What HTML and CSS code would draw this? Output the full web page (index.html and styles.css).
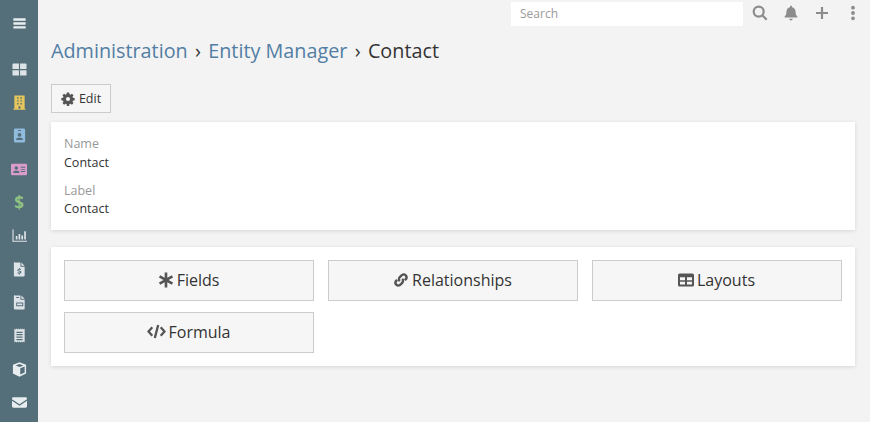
FILE: index.html
```html
<!DOCTYPE html>
<html lang="en">
<head>
<meta charset="utf-8">
<title>Contact - Entity Manager</title>
<link rel="stylesheet" href="styles.css">
</head>
<body>
<aside class="sidebar">
  <a class="toggle"><svg class="ico" viewBox="0 0 16 16"><path fill="#e8edef" d="M2 2.500h12a.6.6 0 0 1 .6.6v1.300a.6.6 0 0 1-.6.6H2a.6.6 0 0 1-.6-.6V3.100a.6.6 0 0 1 .6-.6zM2 6.700h12a.6.6 0 0 1 .6.6v1.300a.6.6 0 0 1-.6.6H2a.6.6 0 0 1-.6-.6V7.300a.6.6 0 0 1 .6-.6zM2 10.900h12a.6.6 0 0 1 .6.6v1.300a.6.6 0 0 1-.6.6H2a.6.6 0 0 1-.6-.6v-1.300a.6.6 0 0 1 .6-.6z"/></svg></a>
  <nav class="nav">
    <a><svg class="ico" viewBox="0 0 16 16"><path fill="#dde3e6" d="M.5 2.500a1 1 0 0 1 1-1h5.900v6H.5zM8.600 1.500h5.900a1 1 0 0 1 1 1v5H8.600zM.5 8.700h6.900v5.800H1.500a1 1 0 0 1-1-1zM8.600 8.700h6.900v4.800a1 1 0 0 1-1 1H8.600z"/></svg></a>
    <a><svg class="ico" viewBox="0 0 16 16"><path fill="#e6c65c" fill-rule="evenodd" d="M2.500.5h11v14.200h1v1h-13v-1h1zM5.500 2.500v1.500h1.500V2.500zM9 2.500v1.500h1.500V2.500zM5.500 5.500V7h1.500V5.500zM9 5.500V7h1.500V5.500zM5.500 8.500V10h1.500V8.500zM9 8.500V10h1.500V8.500zM7 12v2.700h2V12z"/></svg></a>
    <a><svg class="ico" viewBox="0 0 16 16"><path fill="#8fbbdc" fill-rule="evenodd" d="M3.500.5h9A1.500 1.500 0 0 1 14 2v12a1.500 1.500 0 0 1-1.500 1.500h-9A1.500 1.500 0 0 1 2 14V2A1.500 1.500 0 0 1 3.500.5zM6.500 2.200v1h3v-1zM8 5.200a2 2 0 1 0 0 4 2 2 0 0 0 0-4zM5 12.800h6c.4 0 .5-.3.5-.6 0-1-.9-1.800-1.900-1.800H6.400c-1 0-1.900.8-1.900 1.800 0 .3.1.6.5.6z"/></svg></a>
    <a><svg class="ico wide" viewBox="0 0 18 16"><path fill="#d99ccb" fill-rule="evenodd" d="M1.500 1.500h15A1.500 1.500 0 0 1 18 3v10a1.500 1.500 0 0 1-1.500 1.500h-15A1.500 1.500 0 0 1 0 13V3a1.500 1.500 0 0 1 1.500-1.500zM6 4.300a2 2 0 1 0 0 4 2 2 0 0 0 0-4zM3 12h6c.4 0 .5-.3.5-.6 0-1-.9-1.900-1.900-1.900H4.400c-1 0-1.900.9-1.900 1.900 0 .3.1.6.5.6zM11 5v1h5V5zM11 7.400v1h5v-1zM11 9.800v1h5v-1z"/></svg></a>
    <a class="dollar">$</a>
    <a><svg class="ico" viewBox="0 0 16 16"><path fill="#dde3e6" d="M.5 1.500h1.200v12h14.300v1.200H.5zM4 8.500h1.800v3.800H4zM7 6.500h1.800v5.800H7zM10 8h1.800v4.300H10zM13 3.500h1.800v8.800H13z"/></svg></a>
    <a><svg class="ico" viewBox="0 0 16 16"><path fill="#dde3e6" fill-rule="evenodd" d="M3 .5h6v4.500h4.500v9.500a1 1 0 0 1-1 1H3a1 1 0 0 1-1-1v-13.500a1 1 0 0 1 1-1zM10 .5l3.500 3.500H10zM7.300 6.500v.9c-1 .1-1.600.8-1.600 1.500 0 1.800 3.100 1 3.100 2 0 .6-1.800.5-2.700 0l-.4 1c.4.2 1 .4 1.600.4v1h1.200v-1c1-.2 1.600-.8 1.600-1.600 0-1.800-3.100-1.200-3.100-2 0-.6 1.400-.5 2.300-.1l.4-1c-.4-.2-.9-.3-1.300-.4v-.7z"/></svg></a>
    <a><svg class="ico" viewBox="0 0 16 16"><path fill="#dde3e6" fill-rule="evenodd" d="M3 .5h6v4.500h4.500v9.500a1 1 0 0 1-1 1H3a1 1 0 0 1-1-1v-13.500a1 1 0 0 1 1-1zM10 .5l3.500 3.500H10zM4.500 2.200v1h3v-1zM4.500 8v4h7.500V8zM5.500 9h5.500v1.800H5.500z"/></svg></a>
    <a><svg class="ico" viewBox="0 0 16 16"><path fill="#dde3e6" fill-rule="evenodd" d="M2.500.5l1.200 1 1.100-1 1.100 1 1.100-1 1.100 1 1.100-1 1.100 1 1.100-1 1.200 1 .9-1v15l-.9-1-1.200 1-1.100-1-1.100 1-1.100-1-1.100 1-1.100-1-1.100 1-1.100-1-1.200 1zM4.700 3.900v1.300h6.600V3.900zM4.700 6.500v1.300h6.600V6.500zM4.700 9.100v1.300h6.600V9.100zM4.700 11.700V13h6.600v-1.300z"/></svg></a>
    <a><svg class="ico" viewBox="0 0 16 16"><path fill="#e8edef" fill-rule="evenodd" d="M8 .3l7 2.600v9.400l-7 3.400-7-3.400V2.900zM8 2.100L3.900 3.600 8 5.300l4.100-1.700zM8.800 6.700v6.600l4.700-2.200V4.800z"/></svg></a>
    <a><svg class="ico" viewBox="0 0 16 16"><path fill="#e8edef" d="M1.500 2.500h13A1.500 1.500 0 0 1 16 4v.4L8 9.800 0 4.400V4a1.500 1.500 0 0 1 1.500-1.500zM0 6.200l8 5.300 8-5.300V12a1.500 1.500 0 0 1-1.500 1.500h-13A1.500 1.500 0 0 1 0 12z"/></svg></a>
  </nav>
</aside>
<div class="page">
  <header class="topbar">
    <input class="search" type="text" placeholder="Search">
    <svg class="tool" viewBox="0 0 16 16"><path fill="none" stroke="#8c8c8c" stroke-width="2.200" d="M6.700 1.600a5 5 0 1 1 0 10 5 5 0 0 1 0-10zM10.400 10.400l4.300 4.300"/></svg>
    <svg class="tool" viewBox="0 0 16 16"><path fill="#8c8c8c" d="M8 .7c.6 0 1 .4 1 1v.5c2.200.4 3.600 2.200 3.600 4.500 0 3 .9 3.900 1.700 4.800.3.400.1 1-.5 1H2.200c-.6 0-.8-.6-.5-1 .8-.9 1.700-1.800 1.700-4.800 0-2.300 1.400-4.100 3.600-4.500v-.5c0-.6.400-1 1-1zM6.300 13.700h3.400c0 1-.8 1.700-1.700 1.700s-1.700-.7-1.700-1.700z"/></svg>
    <svg class="tool" viewBox="0 0 16 16"><path fill="#8c8c8c" d="M6.900 2h2.200v4.900H14v2.200H9.100V14H6.900V9.100H2V6.900h4.900z"/></svg>
    <svg class="tool" viewBox="0 0 16 16"><path fill="#8c8c8c" d="M8 .8a1.900 1.900 0 1 1 0 3.800 1.900 1.900 0 0 1 0-3.800zM8 6.100a1.900 1.900 0 1 1 0 3.800 1.900 1.900 0 0 1 0-3.800zM8 11.400a1.900 1.900 0 1 1 0 3.800 1.900 1.900 0 0 1 0-3.800z"/></svg>
  </header>
  <main class="content">
    <h1 class="crumbs"><a>Administration</a><span class="sep">›</span><a>Entity Manager</a><span class="sep">›</span><span>Contact</span></h1>
    <button class="edit"><svg class="btn-ico small" viewBox="0 0 16 16"><path fill="#555" fill-rule="evenodd" d="M6.700.5h2.600l.4 2 1 .5 1.800-1 1.800 1.800-1.100 1.700.4 1 2 .4v2.600l-2 .5-.4 1 1.100 1.700-1.800 1.800-1.800-1.100-1 .4-.4 2.100H6.700l-.4-2.100-1-.4-1.800 1.100-1.800-1.800 1.100-1.700-.4-1-2-.5V6.900l2-.4.4-1-1.100-1.700 1.800-1.800 1.800 1 1-.5zM8 5.600a2.400 2.400 0 1 0 0 4.800 2.400 2.400 0 0 0 0-4.800z"/></svg>Edit</button>
    <section class="panel details">
      <div class="field"><div class="label">Name</div><div class="value">Contact</div></div>
      <div class="field"><div class="label">Label</div><div class="value">Contact</div></div>
    </section>
    <section class="panel links">
      <a class="link"><svg class="btn-ico" viewBox="0 0 16 16"><path fill="#555" d="M6.700.5h2.600v5.300l4.500-2.600 1.300 2.200L10.600 8l4.500 2.600-1.300 2.200-4.500-2.600v5.300H6.700v-5.300l-4.500 2.600-1.300-2.200L5.400 8 .9 5.400l1.300-2.200 4.500 2.600z"/></svg>Fields</a>
      <a class="link"><svg class="btn-ico" viewBox="0 0 16 16"><path fill="none" stroke="#555" stroke-width="2.400" d="M6.800 9.200a2.800 2.800 0 0 1 0-4l2.300-2.300a2.900 2.900 0 0 1 4 4l-1.300 1.300M9.200 6.800a2.800 2.800 0 0 1 0 4l-2.300 2.300a2.900 2.900 0 0 1-4-4l1.300-1.300"/></svg>Relationships</a>
      <a class="link"><svg class="btn-ico" viewBox="0 0 16 16"><path fill="#555" fill-rule="evenodd" d="M1.500 1.500h13A1.500 1.500 0 0 1 16 3v10a1.500 1.500 0 0 1-1.500 1.500h-13A1.500 1.500 0 0 1 0 13V3a1.500 1.500 0 0 1 1.500-1.500zM2 5.300v3h5v-3zM9 5.300v3h5v-3zM2 9.800v2.800h5V9.800zM9 9.800v2.800h5V9.800z"/></svg>Layouts</a>
      <a class="link"><svg class="btn-ico code" viewBox="0 0 18 16"><path fill="none" stroke="#555" stroke-width="2.200" d="M5 4L1.400 8 5 12M13 4l3.600 4-3.600 4M10.600 1.800L7.400 14.200"/></svg>Formula</a>
    </section>
  </main>
</div>
</body>
</html>
```
FILE: styles.css
```css
* { box-sizing: border-box; }
html, body { margin: 0; height: 100%; }
body {
  display: flex;
  height: 422px;
  overflow: hidden;
  background: #f3f3f3;
  color: #333;
  font-family: "Open Sans", sans-serif;
  font-size: 13px;
}
.sidebar {
  flex: 0 0 38px;
  background: #546e7a;
  display: flex;
  flex-direction: column;
  align-items: center;
  padding-top: 15px;
}
.toggle { height: 17px; display: flex; align-items: center; }
.nav { margin-top: 20.500px; display: flex; flex-direction: column; align-items: center; }
.nav a {
  height: 33.350px;
  width: 38px;
  display: flex;
  align-items: center;
  justify-content: center;
}
.ico { width: 15px; height: 15px; display: block; }
.ico.wide { width: 16px; height: 15px; }
.dollar { color: #8fc182; font-weight: 700; font-size: 17px; }
.page { flex: 1; min-width: 0; }
.topbar {
  height: 28px;
  display: flex;
  align-items: center;
  padding: 0 0 0 473px;
}
.search {
  width: 232px;
  height: 24px;
  border: 0;
  background: #fff;
  padding: 0 9px 2px;
  font: 12px "Open Sans", sans-serif;
  color: #333;
  outline: 0;
}
.search::placeholder { color: #9a9a9a; opacity: 1; }
.tool { width: 16px; height: 16px; margin-left: 8.500px; margin-top: -2px; flex: none; }
.tool + .tool { margin-left: 15px; }
.content { padding: 0 15px 0 13px; }
.crumbs {
  margin: 9px 0 0;
  font-size: 19.800px;
  font-weight: 400;
  line-height: 28px;
  color: #333;
}
.crumbs a { color: #527ea4; }
.sep { margin: 0 7.300px; }
.edit {
  display: flex;
  align-items: center;
  justify-content: center;
  width: 60px;
  height: 29px;
  margin-top: 19px;
  padding: 0;
  background: #f6f6f6;
  border: 1px solid #ccc;
  color: #333;
  font: 12.500px "Open Sans", sans-serif;
}
.btn-ico { width: 16px; height: 16px; margin-right: 3px; flex: none; }
.btn-ico.small { width: 14px; height: 14px; margin-right: 4px; }
.btn-ico.code { width: 19px; height: 17px; margin-right: 3px; }
.panel { background: #fff; box-shadow: 0 1px 4px rgba(0,0,0,.12); }
.details { margin-top: 9px; padding: 13px; height: 108px; }
.field + .field { margin-top: 10px; }
.label { color: #999; font-size: 12.500px; line-height: 17.500px; }
.value { color: #333; font-size: 12.500px; line-height: 19px; }
.links {
  margin-top: 17px;
  padding: 13px;
  height: 119px;
  display: grid;
  grid-template-columns: repeat(3, 250px);
  grid-auto-rows: 41px;
  column-gap: 14px;
  row-gap: 11px;
}
.link {
  display: flex;
  align-items: center;
  justify-content: center;
  padding: 0 1px 2px 0;
  background: #f6f6f6;
  border: 1px solid #ccc;
  font-size: 16px;
  color: #333;
}
```
